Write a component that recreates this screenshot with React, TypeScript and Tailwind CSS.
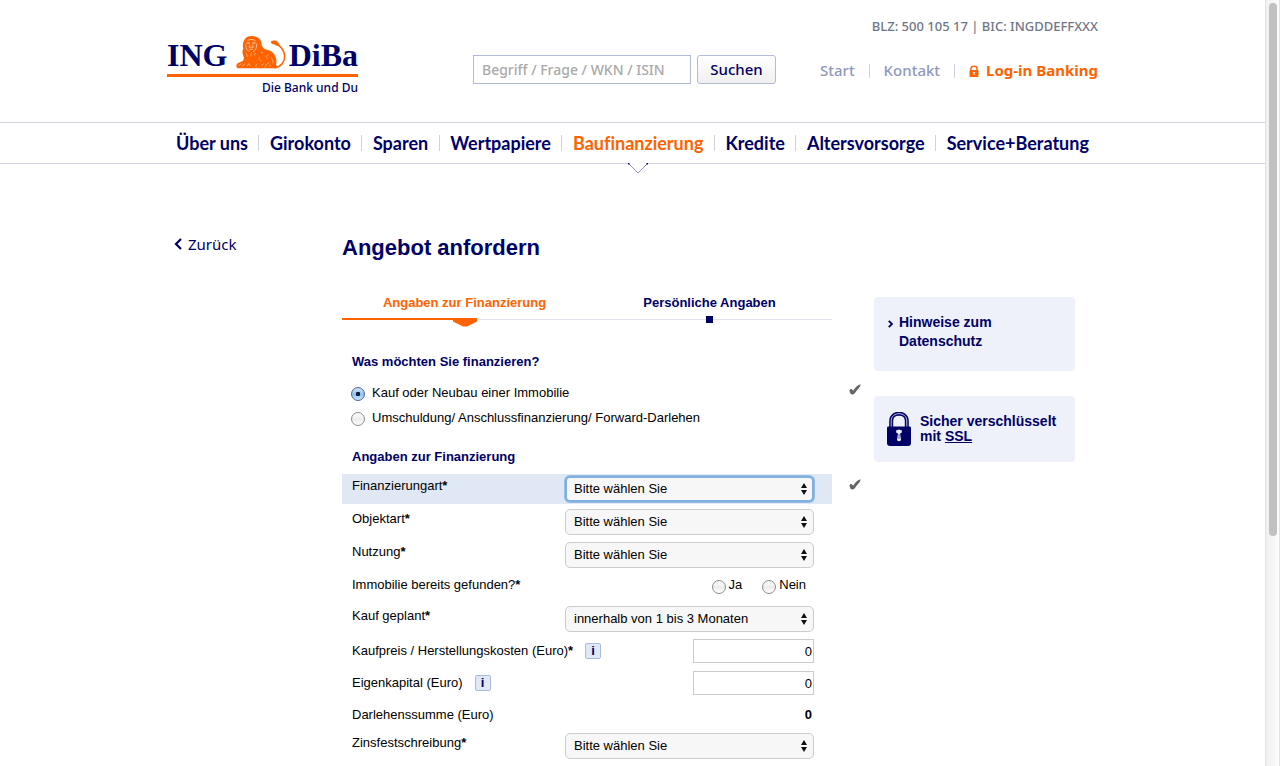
import type { ReactNode } from "react";

const noto = "font-['Noto_Sans',sans-serif]";

function Lion() {
  return (
    <svg viewBox="258 48 150 99" className="ml-1.5 h-[33px] w-[50px]" aria-hidden="true">
      <path
        d="M374 144C394 140 405 124 404 108C403 92 394 82 384 74"
        fill="none"
        stroke="#ff6200"
        strokeWidth="4.5"
      />
      <path d="M362 66C368 60 378 61 383 66C386 70 390 75 388 79C381 78 376 76 373 73C368 73 363 71 362 66Z" fill="#ff6200" />
      <path
        d="M291 51C299 47 312 47 320 51C330 55 335 64 335 75C338 84 344 89 354 90C366 93 374 101 377 112C380 120 380 128 378 135L383 141L374 145H264C257 141 257 132 266 128L278 123C282 119 283 114 280 108C277 100 276 92 280 86C276 74 281 57 291 51Z"
        fill="#ff6200"
      />
      <g fill="none" stroke="#fff" strokeWidth="2" strokeLinecap="round" opacity="0.85">
        <path d="M292 62C297 57 310 57 316 62" />
        <path d="M291 69H298M308 69H315" strokeWidth="3" />
        <path d="M299 74L297 82H310L308 74M299 88H308" />
        <path d="M287 74C287 86 292 93 299 95M320 72C321 82 317 91 310 95" />
        <path d="M290 102L293 110M303 101V108M316 98L314 106" strokeWidth="1.4" />
        <path d="M267 136L272 132M278 138L283 132M292 137L297 131L301 137" />
        <path d="M320 132C316 137 316 141 319 143M328 112C326 118 329 122 334 123" strokeWidth="1.6" />
        <path d="M345 142C347 134 351 130 357 129M354 104C349 107 348 112 352 116M363 114C368 118 370 123 369 129" strokeWidth="1.6" />
        <path d="M334 135L340 132M357 138L361 136M334 99L338 97" strokeWidth="1.6" />
      </g>
    </svg>
  );
}

function Logo() {
  return (
    <a href="#home" className="block w-[191px] text-[#000066]" aria-label="ING-DiBa">
      <span className="flex items-end justify-between border-b-[3px] border-[#ff6200] pb-[5px] font-['Liberation_Serif',serif] text-[32px] leading-[27px] font-bold">
        <span>ING</span>
        <Lion />
        <span>DiBa</span>
      </span>
      <span className={`${noto} block pt-0.5 text-right text-[12px] leading-[18px] font-medium`}>Die Bank und Du</span>
    </a>
  );
}

function SmallLock() {
  return (
    <svg viewBox="0 0 10 12" className="h-3 w-2.5" aria-hidden="true">
      <path d="M2 5V3.5C2 0.6 8 0.6 8 3.5V5" fill="none" stroke="#ff6200" strokeWidth="1.5" />
      <rect x="0.5" y="5" width="9" height="7" rx="1" fill="#ff6200" />
      <path d="M5 7V10M3.8 7.6H6.2" stroke="#fff" strokeWidth="1" />
    </svg>
  );
}

function SslLock() {
  return (
    <svg viewBox="0 0 24 34" className="h-[34px] w-6 shrink-0" aria-hidden="true">
      <path d="M4.2 16V9C4.2 -0.8 19.8 -0.8 19.8 9V16" fill="none" stroke="#000066" strokeWidth="4" />
      <path d="M4.2 16V9C4.2 -0.8 19.8 -0.8 19.8 9V16" fill="none" stroke="#eef1fa" strokeWidth="0.8" />
      <path d="M1 14.5H23Q24 14.5 24 16V31Q24 34 21 34H3Q0 34 0 31V16Q0 14.5 1 14.5Z" fill="#000066" />
      <path d="M9 18.5L12 17.5L15 18.5L14.5 21L13 21.5L14 28Q12 30.5 10 28L11 21.5L9.5 21Z" fill="#eef1fa" />
      <path d="M12 22V27" stroke="#000066" strokeWidth="0.6" />
    </svg>
  );
}

const navItems = [
  "Über uns",
  "Girokonto",
  "Sparen",
  "Wertpapiere",
  "Baufinanzierung",
  "Kredite",
  "Altersvorsorge",
  "Service+Beratung",
];

function MainNav() {
  return (
    <nav className="border-y border-[#d0d2e2]">
      <ul className="mx-auto flex h-10 max-w-[931px] items-center justify-between px-[9px] font-['Lato',sans-serif] text-[18px] font-bold text-[#000066] [font-variant-ligatures:none]">
        {navItems.map((item, i) => (
          <li key={item} className="contents">
            {i > 0 && <span className="h-4 w-px bg-[#d0d2e2]" />}
            {item === "Baufinanzierung" ? (
              <span className="relative flex h-10 items-center">
                <a href="#baufinanzierung" aria-current="page" className="text-[#ff6200]">
                  {item}
                </a>
                <svg viewBox="0 0 20 11" className="absolute top-full left-1/2 h-[11px] w-5 -translate-x-1/2" aria-hidden="true">
                  <path d="M0.5 0L10 9.5L19.5 0Z" fill="#fff" />
                  <path d="M0.5 0.5L10 10L19.5 0.5" fill="none" stroke="#8e96bd" />
                  <path d="M0 0H1.5V1.5H0ZM18.5 0H20V1.5H18.5Z" fill="#000066" />
                </svg>
              </span>
            ) : (
              <a href={`#${item}`}>{item}</a>
            )}
          </li>
        ))}
      </ul>
    </nav>
  );
}

function Header() {
  return (
    <header>
      <div className="mx-auto flex h-[122px] max-w-[931px] items-start justify-between">
        <div className="pt-9">
          <Logo />
        </div>
        <div className={`${noto} w-[625px] pt-4 font-medium`}>
          <p className="text-right text-[13px] leading-5 text-[#6f7787]">BLZ: 500 105 17 | BIC: INGDDEFFXXX</p>
          <div className="flex items-center justify-between pt-[19px] text-[15px]">
            <form className="flex gap-1.5" onSubmit={(e) => e.preventDefault()}>
              <input
                type="text"
                aria-label="Suche"
                placeholder="Begriff / Frage / WKN / ISIN"
                className="h-[29px] w-[218px] border border-[#b3bad6] px-2 text-[14px] placeholder:text-[#a9a9a9] focus:outline-none"
              />
              <button
                type="submit"
                className="h-[29px] w-[79px] rounded-[3px] border border-[#b3bad6] bg-linear-to-b from-white to-[#f0f0f0] text-[#000066]"
              >
                Suchen
              </button>
            </form>
            <div className="flex w-[278px] items-center justify-between pt-0.5 text-[#8f99bb]">
              <a href="#start">Start</a>
              <span className="h-3.5 w-px bg-[#d0d2e2]" />
              <a href="#kontakt">Kontakt</a>
              <span className="h-3.5 w-px bg-[#d0d2e2]" />
              <a href="#login" className="flex items-center gap-[7px] font-bold text-[#ff6200]">
                <SmallLock />
                Log-in Banking
              </a>
            </div>
          </div>
        </div>
      </div>
      <MainNav />
    </header>
  );
}

function Steps() {
  return (
    <ol className="mr-[42px] grid grid-cols-2 text-center text-[13px] leading-4 font-bold">
      <li className="text-[#ff6200]" aria-current="step">
        Angaben zur Finanzierung
        <span className="mt-[7px] flex h-[9px]">
          <span className="h-0.5 flex-1 bg-[#ff6200]" />
          <svg viewBox="0 0 24 9" className="h-[9px] w-6" aria-hidden="true">
            <path d="M0 0H24V3.5L14 8.5H10L0 3.5Z" fill="#ff6200" />
          </svg>
          <span className="mt-px h-px w-[calc(50%-12px)] bg-[#dfe3ec]" />
        </span>
      </li>
      <li className="text-[#000066]">
        Persönliche Angaben
        <span className="mt-[5px] flex h-[7px] items-center">
          <span className="h-px flex-1 bg-[#dfe3ec]" />
          <span className="h-[7px] w-[7px] bg-[#000066]" />
          <span className="h-px flex-1 bg-[#dfe3ec]" />
        </span>
      </li>
    </ol>
  );
}

const radioClass =
  "m-0 h-3.5 w-3.5 shrink-0 appearance-none rounded-full border border-[#8c8c8c] bg-linear-to-b from-white via-[#ececec] to-white checked:border-[#4a6591] checked:bg-[radial-gradient(circle_at_center,#0b1f3f_0_2px,transparent_2.5px),linear-gradient(#cfe3f8,#8fc1f2_55%,#c8ecff)]";

function Check() {
  return (
    <svg viewBox="0 0 13 12" className="h-[11px] w-3" role="img" aria-label="ausgefüllt">
      <path d="M0.5 7C1 5.4 2.8 5 3.4 6L4.4 7.4C6.4 4.2 8.8 1.6 12.6 0.3C12.8 3 8.6 6.8 5.8 10.6C4.6 11.8 2.2 11.8 1.6 10.6C1.2 9.6 0.7 8.2 0.5 7Z" fill="#666666" />
    </svg>
  );
}

function Star() {
  return <span className="font-bold">*</span>;
}

type SelectProps = { id: string; value: string; focused?: boolean };

function Select({ id, value, focused }: SelectProps) {
  return (
    <span className="relative block w-[249px]">
      <select
        id={id}
        className={`block h-[26px] w-full appearance-none rounded-[5px] bg-[#f7f7f7] text-[13px] text-black focus:outline-none ${
          focused ? "border-2 border-[#7fb0e0] pl-[7px] ring-1 ring-[#94bce4]" : "border border-[#cccccc] pl-2"
        }`}
      >
        <option>{value}</option>
      </select>
      <svg viewBox="0 0 6 12" className="pointer-events-none absolute top-[7px] right-[7px] h-3 w-1.5" aria-hidden="true">
        <path d="M3 0L6 5H0ZM0 7H6L3 12Z" fill="#111" />
      </svg>
    </span>
  );
}

type RowProps = {
  label: ReactNode;
  htmlFor?: string;
  height: string;
  labelPad: string;
  info?: boolean;
  active?: boolean;
  children: ReactNode;
};

function Row({ label, htmlFor, height, labelPad, info, active, children }: RowProps) {
  return (
    <div className={`flex items-center ${height}`}>
      <div className={`flex h-full flex-1 items-center justify-between pr-[18px] pl-2.5 ${active ? "bg-[#e0e8f6]" : ""}`}>
        <div className={`flex items-center gap-3 self-start leading-4 ${labelPad}`}>
          <label htmlFor={htmlFor}>{label}</label>
          {info && (
            <button
              type="button"
              aria-label="Information"
              className="h-4 w-4 rounded-[2px] border border-[#a9bcdb] bg-[#e0e8f6] text-[13px] leading-[14px] font-bold text-[#000066]"
            >
              i
            </button>
          )}
        </div>
        {children}
      </div>
      <div className="w-[42px] pb-2.5 pl-[17px]">{active && <Check />}</div>
    </div>
  );
}

function OfferForm() {
  const amount =
    "mt-0.5 h-6 w-[121px] self-start border border-[#cccccc] bg-white pr-px text-right text-[13px] focus:outline-none";
  return (
    <form className="text-[13px] text-black" onSubmit={(e) => e.preventDefault()}>
      <fieldset className="pt-[27px]">
        <legend className="contents">
          <span className="block pl-2.5 leading-4 font-bold text-[#000066]">Was möchten Sie finanzieren?</span>
        </legend>
        <div className="flex items-start justify-between pt-3.5 pl-[9px]">
          <div className="flex flex-col gap-[9px] pt-px leading-4">
            <label className="flex gap-[7px]">
              <input type="radio" name="zweck" defaultChecked className={`${radioClass} mt-0.5`} />
              Kauf oder Neubau einer Immobilie
            </label>
            <label className="flex gap-[7px]">
              <input type="radio" name="zweck" className={`${radioClass} mt-0.5`} />
              Umschuldung/ Anschlussfinanzierung/ Forward-Darlehen
            </label>
          </div>
          <div className="w-[42px] pl-[17px]">
            <Check />
          </div>
        </div>
      </fieldset>
      <h2 className="pt-[23px] pb-[9px] pl-2.5 leading-4 font-bold text-[#000066]">Angaben zur Finanzierung</h2>
      <div className="flex flex-col gap-[3px]">
        <Row label={<>Finanzierungart<Star /></>} htmlFor="art" height="h-[30px]" labelPad="pt-1" active>
          <Select id="art" value="Bitte wählen Sie" focused />
        </Row>
        <Row label={<>Objektart<Star /></>} htmlFor="objekt" height="h-[30px]" labelPad="pt-1">
          <Select id="objekt" value="Bitte wählen Sie" />
        </Row>
        <Row label={<>Nutzung<Star /></>} htmlFor="nutzung" height="h-[30px]" labelPad="pt-1">
          <Select id="nutzung" value="Bitte wählen Sie" />
        </Row>
        <Row label={<>Immobilie bereits gefunden?<Star /></>} height="h-7" labelPad="pt-1">
          <div className="flex gap-5 self-start pt-1 pr-2 leading-4">
            <label className="flex gap-[3px]">
              <input type="radio" name="gefunden" className={`${radioClass} mt-[3px]`} />
              Ja
            </label>
            <label className="flex gap-[3px]">
              <input type="radio" name="gefunden" className={`${radioClass} mt-[3px]`} />
              Nein
            </label>
          </div>
        </Row>
        <Row label={<>Kauf geplant<Star /></>} htmlFor="geplant" height="h-[30px]" labelPad="pt-1">
          <Select id="geplant" value="innerhalb von 1 bis 3 Monaten" />
        </Row>
        <Row label={<>Kaufpreis / Herstellungskosten (Euro)<Star /></>} htmlFor="preis" height="h-[29px]" labelPad="pt-1.5" info>
          <input id="preis" type="text" defaultValue="0" className={amount} />
        </Row>
        <Row label="Eigenkapital (Euro)" htmlFor="kapital" height="h-[29px]" labelPad="pt-1.5" info>
          <input id="kapital" type="text" defaultValue="0" className={amount} />
        </Row>
        <Row label="Darlehenssumme (Euro)" htmlFor="summe" height="h-[27px]" labelPad="pt-1.5">
          <output id="summe" className="pr-0.5 leading-4 font-bold">0</output>
        </Row>
        <Row label={<>Zinsfestschreibung<Star /></>} htmlFor="zins" height="h-[30px]" labelPad="pt-1">
          <Select id="zins" value="Bitte wählen Sie" />
        </Row>
      </div>
    </form>
  );
}

function Sidebar() {
  return (
    <aside className="flex flex-col gap-[25px] pt-[133px] text-[14px] font-bold text-[#000066]">
      <div className="h-[74px] rounded bg-[#eef1fa] pt-4 pl-3.5">
        <a href="#datenschutz" className="flex gap-1.5 leading-[19px]">
          <svg viewBox="0 0 5 8" className="mt-[7px] h-2 w-[5px] shrink-0" aria-hidden="true">
            <path d="M0.8 0.8L4 4L0.8 7.2" fill="none" stroke="#000066" strokeWidth="1.9" />
          </svg>
          <span>
            Hinweise zum
            <br />
            Datenschutz
          </span>
        </a>
      </div>
      <div className="flex h-[66px] items-center gap-[9px] rounded bg-[#eef1fa] pl-[13px]">
        <SslLock />
        <p className="leading-[15px]">
          Sicher verschlüsselt
          <br />
          mit{" "}
          <a href="#ssl" className="underline">
            SSL
          </a>
        </p>
      </div>
    </aside>
  );
}

export default function App() {
  return (
    <div className="flex min-h-screen bg-white font-['Liberation_Sans',Arial,sans-serif]">
      <div className="min-w-0 flex-1">
        <Header />
        <main className="mx-auto grid max-w-[931px] grid-cols-[175px_minmax(0,1fr)_201px] pr-[23px]">
          <div className="pt-[70px] pl-[7px]">
            <a href="#zurueck" className={`${noto} flex items-center gap-1.5 text-[15px] leading-5 text-[#000066]`}>
              <svg viewBox="0 0 8 12" className="h-3 w-2" aria-hidden="true">
                <path d="M7 1L2 6L7 11" fill="none" stroke="#000066" strokeWidth="2.2" />
              </svg>
              Zurück
            </a>
          </div>
          <div>
            <h1 className="pt-[71px] pb-[34px] text-[22px] leading-[26px] font-bold text-[#000066]">Angebot anfordern</h1>
            <Steps />
            <OfferForm />
          </div>
          <Sidebar />
        </main>
      </div>
      <div className="w-[15px] border-x border-[#e2e2e2] bg-linear-to-r from-[#f0f0f0] to-[#fcfcfc] px-[3px] pt-[3px]" aria-hidden="true">
        <div className="h-[533px] w-2 rounded-full bg-[#c1c1c1]" />
      </div>
    </div>
  );
}
